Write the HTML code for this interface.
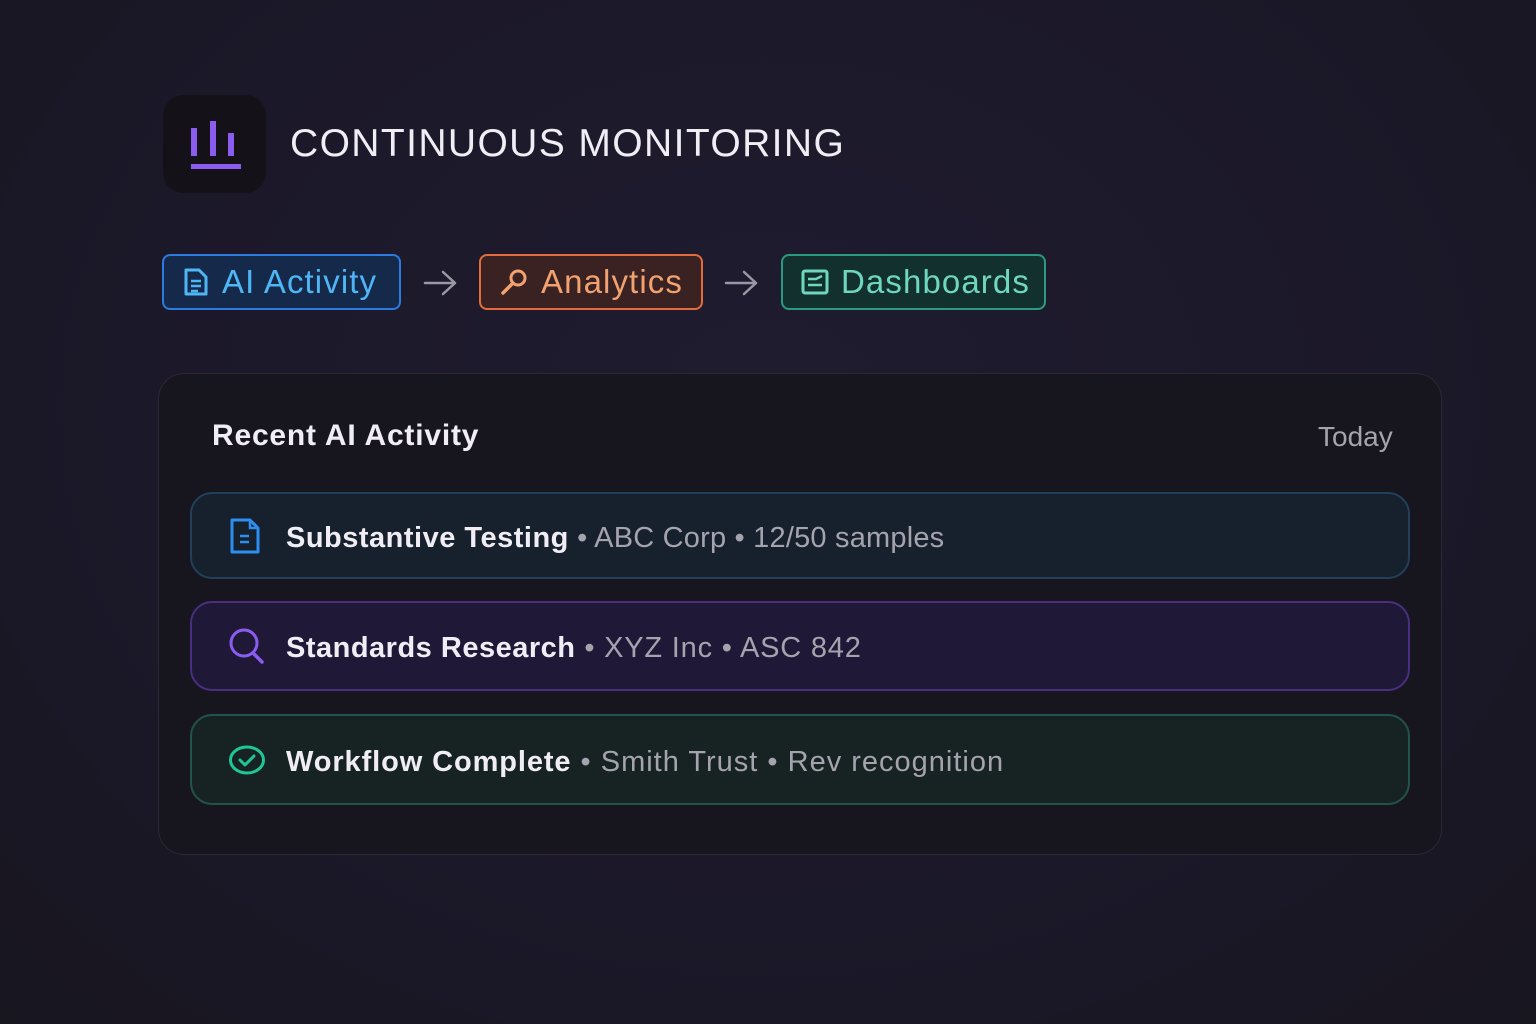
<!DOCTYPE html>
<html><head><meta charset="utf-8"><style>
*{margin:0;padding:0;box-sizing:border-box}
body{width:1536px;height:1024px;background:radial-gradient(ellipse at 50% 40%,#201c30 0%,#1b1829 60%,#18161f 100%);font-family:"Liberation Sans",sans-serif;position:relative;overflow:hidden;color:#eee}
.abs{position:absolute}
.logo{left:163px;top:95px;width:103px;height:98px;background:#141218;border-radius:20px}
.title{left:290px;top:122px;font-size:39px;font-weight:500;color:#f0eef4;letter-spacing:1.4px}
.badge{top:254px;height:56px;border-radius:8px;border:2px solid;display:flex;align-items:center;font-size:33px;padding-left:18px;gap:12px;letter-spacing:1.1px}
.arrow{top:268px}
.card{left:158px;top:373px;width:1284px;height:482px;background:#17151d;border:1px solid #2a2833;border-radius:26px}
.row{left:190px;width:1220px;border-radius:22px;border:2px solid;display:flex;align-items:center;padding-left:36px;font-size:29px;padding-top:5px}
.row svg{margin-top:-5px}
.row b{font-weight:600;color:#f0eef4;margin-left:22px;letter-spacing:0.5px}
.row span{color:#a5a3ad;letter-spacing:0.6px}
</style></head><body>
<div class="abs logo">
<svg width="103" height="98"><g fill="#8a5cf0"><rect x="28" y="33" width="6" height="28"/><rect x="47" y="26" width="6" height="35"/><rect x="65" y="38" width="6" height="23"/><rect x="28" y="69" width="50" height="5"/></g></svg>
</div>
<div class="abs title">CONTINUOUS MONITORING</div>

<div class="abs badge" style="left:162px;width:239px;background:#15294a;border-color:#2b7be0;color:#4fb6f5">
<svg width="28" height="30" viewBox="0 0 28 30"><path d="M4 3h13l7 7v17H4z" fill="none" stroke="#4fb6f5" stroke-width="3" stroke-linejoin="round"/><path d="M9 14h10M9 19h10M9 24h7" stroke="#4fb6f5" stroke-width="2.5"/></svg>AI Activity</div>
<svg class="abs arrow" style="left:423px" width="34" height="30" viewBox="0 0 34 30"><path d="M2 15h30M20 4l12 11-12 11" fill="none" stroke="#9a98a4" stroke-width="2.5" stroke-linecap="round" stroke-linejoin="round"/></svg>
<div class="abs badge" style="left:479px;width:224px;background:#3a2222;border-color:#e46c3c;color:#f2a170">
<svg width="30" height="30" viewBox="0 0 30 30"><circle cx="19" cy="11" r="7" fill="none" stroke="#f2a170" stroke-width="3"/><path d="M14 16L4 26" stroke="#f2a170" stroke-width="3.5" stroke-linecap="round"/></svg>Analytics</div>
<svg class="abs arrow" style="left:724px" width="34" height="30" viewBox="0 0 34 30"><path d="M2 15h30M20 4l12 11-12 11" fill="none" stroke="#9a98a4" stroke-width="2.5" stroke-linecap="round" stroke-linejoin="round"/></svg>
<div class="abs badge" style="left:781px;width:265px;background:#12302e;border-color:#2a9a82;color:#6fd6bf">
<svg width="28" height="28" viewBox="0 0 28 28"><rect x="2" y="3" width="24" height="22" rx="2" fill="none" stroke="#6fd6bf" stroke-width="3"/><path d="M7 11h8l6-3M7 17h14" stroke="#6fd6bf" stroke-width="2.5" fill="none"/></svg>Dashboards</div>

<div class="abs card"></div>
<div class="abs" style="left:212px;top:419px;font-size:30px;font-weight:600;color:#f0eef4;letter-spacing:0.8px">Recent AI Activity</div>
<div class="abs" style="left:1318px;top:421px;font-size:28px;color:#a5a3ad">Today</div>

<div class="abs row" style="top:492px;height:87px;background:#17202d;border-color:#22405a">
<svg width="36" height="36" viewBox="0 0 36 36"><path d="M4 2h18l8 8v24H4z" fill="none" stroke="#2b8ef0" stroke-width="3" stroke-linejoin="round"/><path d="M22 2v8h8" fill="none" stroke="#2b8ef0" stroke-width="2.5"/><path d="M12 18h9M12 24h9" stroke="#2b8ef0" stroke-width="2.5"/></svg>
<b>Substantive Testing</b><span style="letter-spacing:0.2px">&nbsp;• ABC Corp • 12/50 samples</span></div>

<div class="abs row" style="top:601px;height:90px;background:#1f1836;border-color:#4a2f7e">
<svg width="38" height="38" viewBox="0 0 38 38"><circle cx="16" cy="16" r="13" fill="none" stroke="#8a5cf0" stroke-width="3"/><path d="M25 26l9 9" stroke="#8a5cf0" stroke-width="3.5" stroke-linecap="round"/></svg>
<b style="margin-left:20px">Standards Research</b><span style="letter-spacing:0.8px">&nbsp;• XYZ Inc • ASC 842</span></div>

<div class="abs row" style="top:714px;height:91px;background:#172322;border-color:#23534a">
<svg width="38" height="30" viewBox="0 0 38 30"><ellipse cx="19" cy="15" rx="16.5" ry="13" fill="none" stroke="#1fc796" stroke-width="3"/><path d="M12 15l5 5 9-9" fill="none" stroke="#1fc796" stroke-width="3" stroke-linecap="round" stroke-linejoin="round"/></svg>
<b style="margin-left:20px;letter-spacing:0.9px">Workflow Complete</b><span style="letter-spacing:1px">&nbsp;• Smith Trust • Rev recognition</span></div>
</body></html>
